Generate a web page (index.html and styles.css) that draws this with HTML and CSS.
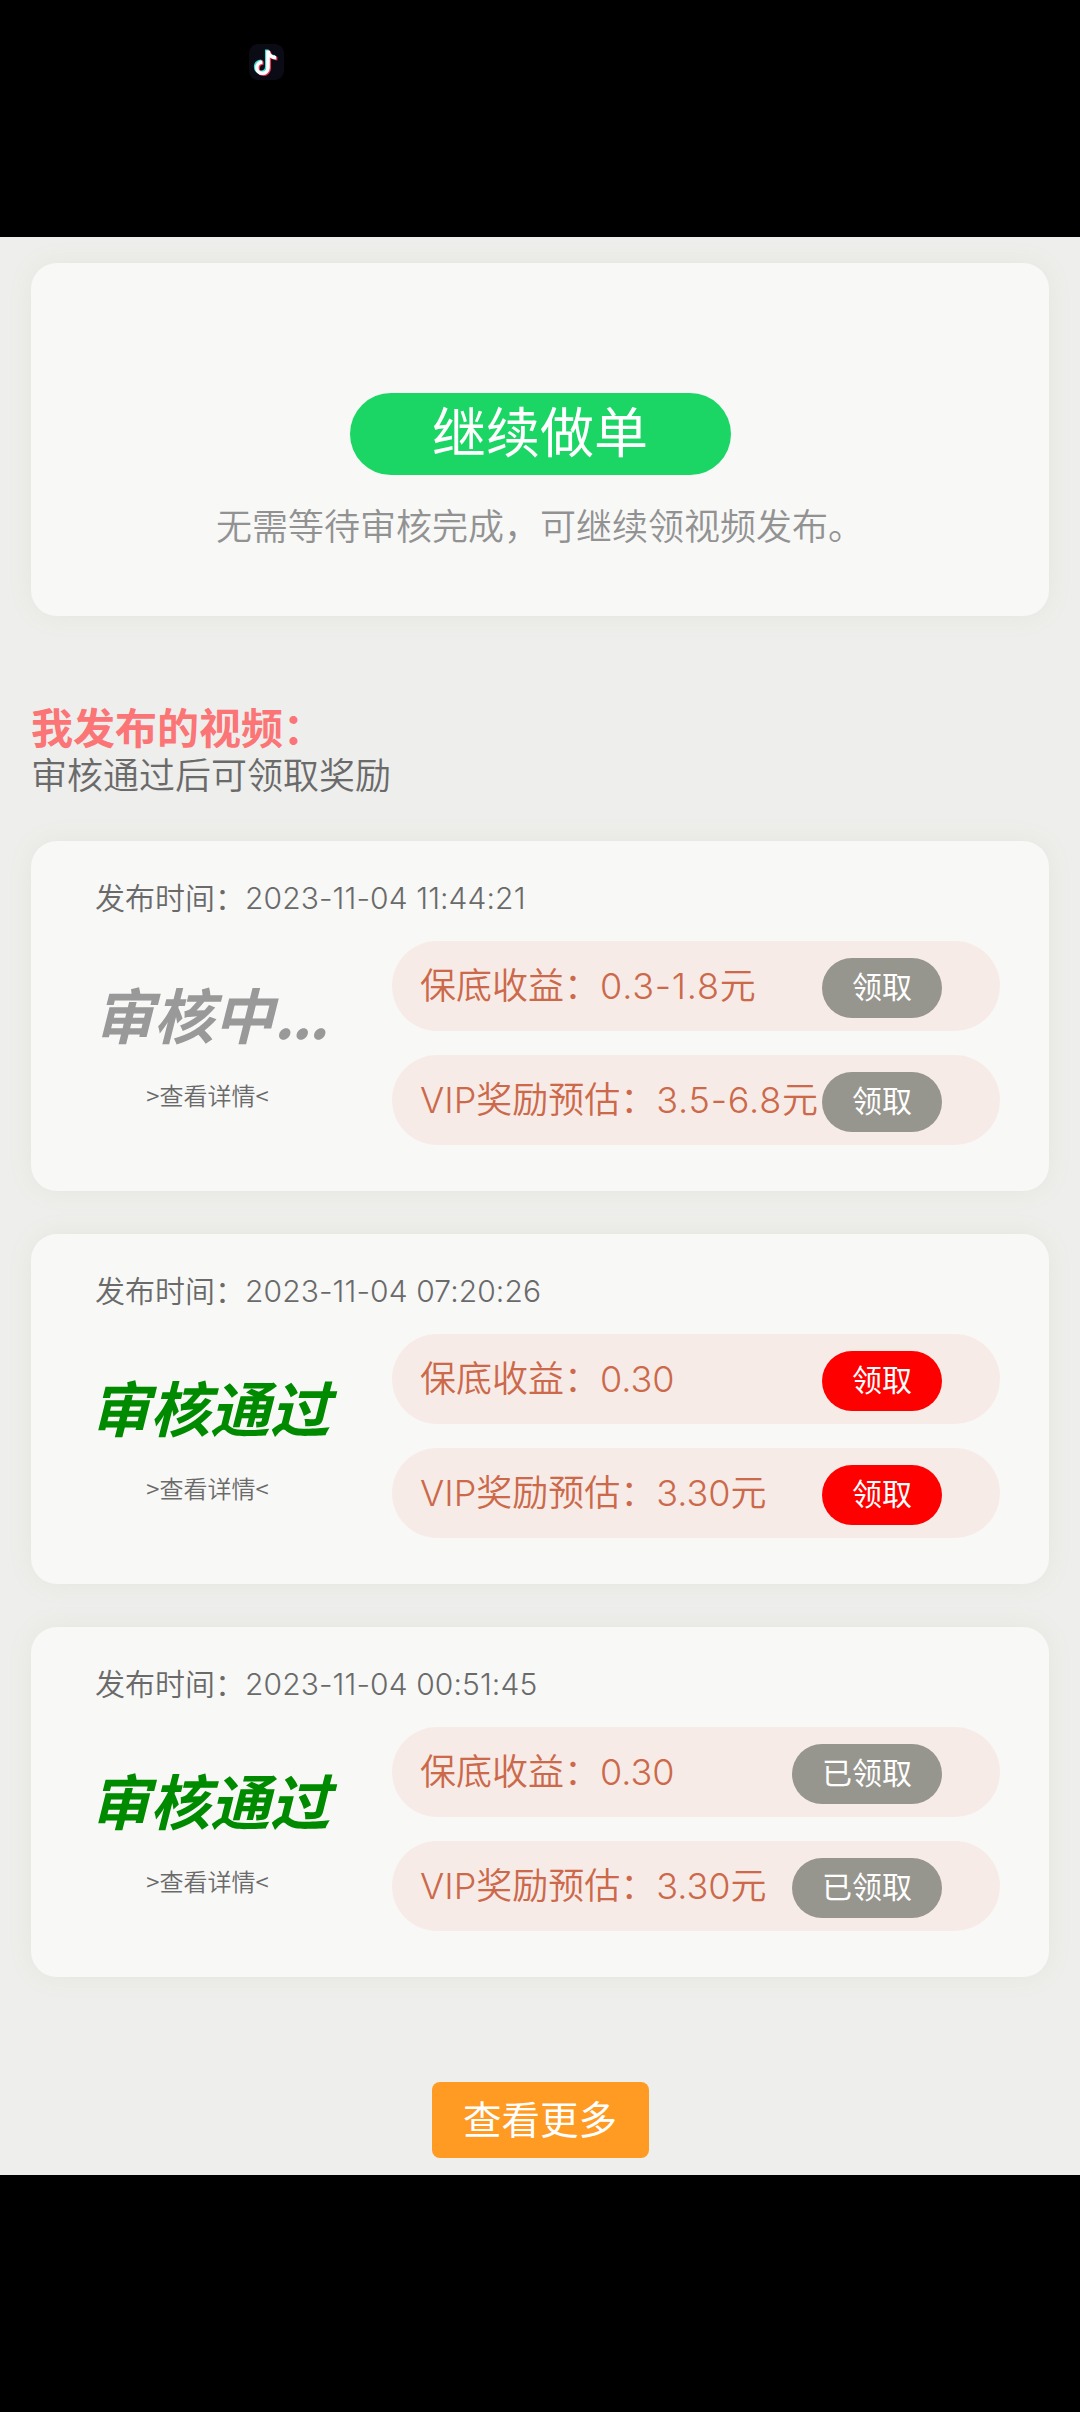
FILE: index.html
```html
<!DOCTYPE html>
<html lang="zh-CN">
<head>
<meta charset="utf-8">
<title>我发布的视频</title>
<link rel="stylesheet" href="styles.css">
</head>
<body>
<header class="statusbar">
  <svg class="app-icon" viewBox="0 0 35 36" role="img" aria-label="抖音">
    <rect width="35" height="36" rx="9" fill="#0b0b15"/>
    <g fill="none" stroke-width="3.6">
      <path d="M17.8 5.5V22.8A5.6 5.6 0 1 1 12.2 17.2M17.8 6.2C18.4 10.2 21.5 12.7 26 12.9" stroke="#3fd9d6"/>
      <path d="M20.2 7.3V24.6A5.6 5.6 0 1 1 14.6 19M20.2 8C20.8 12 23.9 14.5 28.4 14.7" stroke="#ee3358"/>
      <path d="M19 6.4V23.7A5.6 5.6 0 1 1 13.4 18.1M19 7.1C19.6 11.1 22.7 13.6 27.2 13.8" stroke="#fff"/>
    </g>
  </svg>
</header>
<main class="page">
  <section class="card hero">
    <button class="continue">继续做单</button>
    <p class="hint">无需等待审核完成，可继续领视频发布。</p>
  </section>

  <section class="intro">
    <h1 class="title">我发布的视频：</h1>
    <p class="subtitle">审核通过后可领取奖励</p>
  </section>

  <section class="list">
    <article class="card record">
      <p class="time">发布时间：<span class="stamp">2023-11-04 11:44:21</span></p>
      <div class="body">
        <div class="state">
          <strong class="status pending">审核中<span class="dots">...</span></strong>
          <a class="detail">&gt;查看详情&lt;</a>
        </div>
        <div class="rewards">
          <div class="reward"><span class="label">保底收益：<span class="num range">0.3-1.8</span>元</span><button class="claim">领取</button></div>
          <div class="reward"><span class="label"><span class="vip">VIP</span>奖励预估：<span class="num range">3.5-6.8</span>元</span><button class="claim">领取</button></div>
        </div>
      </div>
    </article>
    <article class="card record">
      <p class="time">发布时间：<span class="stamp">2023-11-04 07:20:26</span></p>
      <div class="body">
        <div class="state">
          <strong class="status">审核通过</strong>
          <a class="detail">&gt;查看详情&lt;</a>
        </div>
        <div class="rewards">
          <div class="reward"><span class="label">保底收益：<span class="num">0.30</span></span><button class="claim active">领取</button></div>
          <div class="reward"><span class="label"><span class="vip">VIP</span>奖励预估：<span class="num">3.30</span>元</span><button class="claim active">领取</button></div>
        </div>
      </div>
    </article>
    <article class="card record">
      <p class="time">发布时间：<span class="stamp">2023-11-04 00:51:45</span></p>
      <div class="body">
        <div class="state">
          <strong class="status">审核通过</strong>
          <a class="detail">&gt;查看详情&lt;</a>
        </div>
        <div class="rewards">
          <div class="reward"><span class="label">保底收益：<span class="num">0.30</span></span><button class="claim">已领取</button></div>
          <div class="reward"><span class="label"><span class="vip">VIP</span>奖励预估：<span class="num">3.30</span>元</span><button class="claim">已领取</button></div>
        </div>
      </div>
    </article>
  </section>

  <button class="more">查看更多</button>
</main>
</body>
</html>
```
FILE: styles.css
```css
* { box-sizing: border-box; }
body {
  margin: 0;
  width: 1080px;
  height: 2412px;
  background: #000;
  font-family: "Noto Sans CJK SC", sans-serif;
  font-weight: 350;
}
h1, p { margin: 0; }
button { border: 0; padding: 0; margin: 0; font: inherit; color: #fff; }

.statusbar { height: 237px; padding: 44px 0 0 249px; }
.app-icon { display: block; width: 35px; height: 36px; }

.page {
  height: 1938px;
  padding: 26px 31px 0;
  background: #eeeeec;
  display: flex;
  flex-direction: column;
  overflow: hidden;
}
.card {
  background: #f8f8f7;
  border-radius: 26px;
  box-shadow: 0 0 26px rgba(140, 140, 90, .09);
}

.hero {
  height: 353px;
  padding-top: 130px;
  display: flex;
  flex-direction: column;
  align-items: center;
}
.continue {
  width: 381px;
  height: 82px;
  padding-bottom: 8px;
  border-radius: 41px;
  background: #1bd665;
  font-size: 54px;
  font-weight: 400;
  line-height: 70px;
}
.hint { margin-top: 22px; font-size: 36px; line-height: 54px; color: #929292; }

.intro { margin-top: 84px; height: 141px; }
.title { font-size: 42px; font-weight: 700; line-height: 52px; color: #fb7476; }
.subtitle { font-size: 36px; line-height: 43px; color: #6a6a6a; }

.list { display: flex; flex-direction: column; gap: 43px; }
.record { height: 350px; padding: 35px 49px 0 64px; }
.time { font-size: 30px; line-height: 40px; color: #6a6a6a; }
.stamp { font-family: Inter, sans-serif; font-weight: 300; letter-spacing: .1px; }
.body { margin-top: 23px; display: flex; }
.state {
  width: 240px;
  margin: 0 62px 0 -5px;
  padding-top: 35px;
  display: flex;
  flex-direction: column;
  align-items: center;
}
.status {
  font-size: 60px;
  line-height: 74px;
  font-weight: 700;
  font-style: italic;
  color: #008a00;
  white-space: nowrap;
}
.pending { color: #999; }
.dots { letter-spacing: -2px; }
.detail { margin: 28px 5px 0 0; font-size: 24px; line-height: 34px; color: #6a6a6a; }

.rewards { width: 608px; display: flex; flex-direction: column; gap: 24px; }
.reward {
  height: 90px;
  padding: 0 58px 0 28px;
  border-radius: 45px;
  background: #f7ebe7;
  display: flex;
  align-items: center;
  justify-content: space-between;
  font-size: 36px;
  line-height: 50px;
  white-space: nowrap;
  color: #cb694a;
}
.label { padding-bottom: 4px; }
.num, .vip { font-family: Inter, sans-serif; }
.range { letter-spacing: .8px; }
.claim {
  flex: none;
  height: 60px;
  margin-top: 4px;
  padding: 0 30px 7px;
  border-radius: 30px;
  background: #96958e;
  font-size: 30px;
  font-weight: 400;
  line-height: 44px;
}
.active { background: #fe0000; }

.more {
  align-self: center;
  width: 217px;
  height: 76px;
  margin-top: 105px;
  padding-bottom: 7px;
  border-radius: 8px;
  background: #ff9a22;
  font-size: 38.5px;
  font-weight: 400;
  line-height: 60px;
}
```
